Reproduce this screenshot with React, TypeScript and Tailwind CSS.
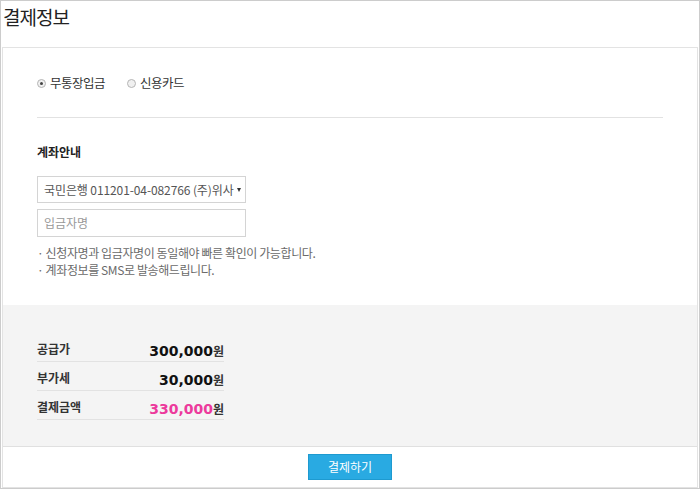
import React from 'react';

const kr = '"Noto Sans CJK KR", "Noto Sans", sans-serif';
const num = '"DejaVu Sans", "Noto Sans CJK KR", sans-serif';

const Radio: React.FC<{ checked?: boolean; label: string }> = ({ checked, label }) => (
  <label className="flex items-center gap-[4px] text-[12.5px] leading-[16px] text-[#333]">
    <span className="w-[9px] h-[9px] rounded-full border border-[#b5b5b5] bg-[#f0f0f0] flex items-center justify-center">
      {checked && <span className="w-[3px] h-[3px] rounded-full bg-[#444]" />}
    </span>
    <span className="tracking-[-0.5px]">{label}</span>
  </label>
);

const PriceRow: React.FC<{ label: string; value: string; pink?: boolean }> = ({ label, value, pink }) => (
  <div className="h-[29px] pt-[8px] border-b border-[#e2e2e2] flex justify-between">
    <span className="text-[12px] leading-[16px] font-bold text-[#333]">{label}</span>
    <span className="leading-[16px]">
      <span
        className={`text-[14px] font-bold ${pink ? 'text-[#ec3a9c]' : 'text-[#111]'}`}
        style={{ fontFamily: num }}
      >
        {value}
      </span>
      <span className="text-[12px] font-bold text-[#333]">원</span>
    </span>
  </div>
);

export default function App() {
  return (
    <div className="w-[700px] h-[489px] border border-[#cccccc] bg-white flex flex-col" style={{ fontFamily: kr }}>
      {/* Title */}
      <div className="h-[46px] pl-[2px] pt-[2px]">
        <h1 className="text-[19px] leading-[28px] text-[#222] tracking-[-1px]">결제정보</h1>
      </div>

      {/* Card */}
      <div className="mx-[1px] flex-1 border border-[#e3e3e3] flex flex-col">
        <div className="h-[257px] px-[34px] pt-[27px]">
          <div className="flex items-center gap-[22px]">
            <Radio checked label="무통장입금" />
            <Radio label="신용카드" />
          </div>
          <div className="mt-[26px] border-t border-[#e2e2e2]" />

          <h2 className="mt-[26px] text-[12px] leading-[16px] font-bold text-[#222]">계좌안내</h2>

          <div className="mt-[16px] w-[209px] h-[27px] border border-[#d4d4d4] flex items-center justify-between pl-[6px] pr-[4px] text-[12px] text-[#555]">
            <span className="tracking-[-0.1px]">국민은행 011201-04-082766 (주)위사</span>
            <span className="w-0 h-0 border-l-[2.5px] border-r-[2.5px] border-t-[4px] border-l-transparent border-r-transparent border-t-[#333]" />
          </div>
          <div className="mt-[6px] w-[209px] h-[28px] border border-[#d4d4d4] flex items-center pl-[6px] text-[12px] text-[#999]">
            입금자명
          </div>

          <div className="mt-[7px] text-[12px] leading-[17px] text-[#6a6a6a] tracking-[-0.4px]">
            <p>· 신청자명과 입금자명이 동일해야 빠른 확인이 가능합니다.</p>
            <p>· 계좌정보를 SMS로 발송해드립니다.</p>
          </div>
        </div>

        {/* Price summary */}
        <div className="h-[142px] bg-[#f4f4f4] border-b border-[#e0e0e0] px-[34px] pt-[28px]">
          <div className="w-[187px]">
            <PriceRow label="공급가" value="300,000" />
            <PriceRow label="부가세" value="30,000" />
            <PriceRow label="결제금액" value="330,000" pink />
          </div>
        </div>

        <div className="flex-1 flex justify-center pt-[7px]">
          <button className="w-[84px] h-[26px] bg-[#29aae2] border border-[#1e9ad0] text-white text-[12px]">
            결제하기
          </button>
        </div>
      </div>
    </div>
  );
}
